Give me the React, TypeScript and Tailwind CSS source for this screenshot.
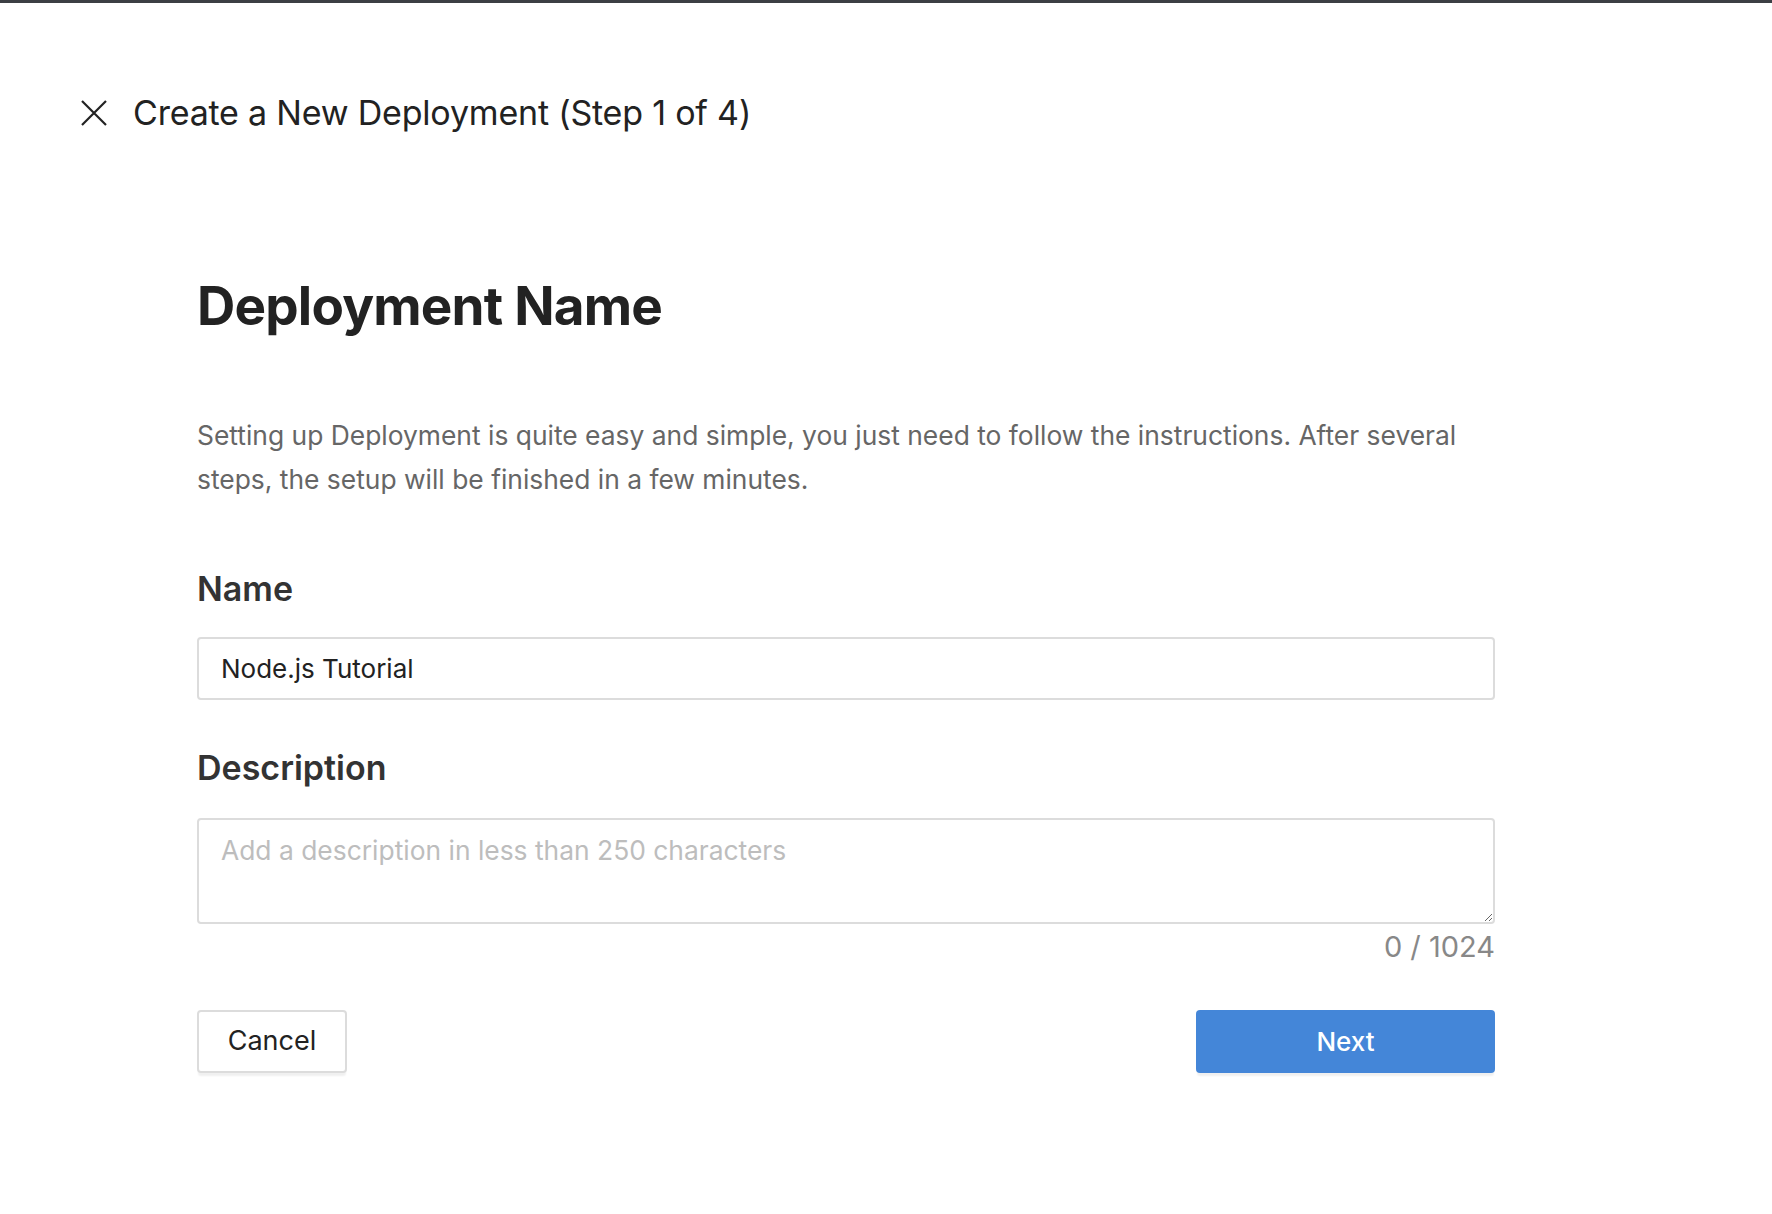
import { useState } from "react";

export default function App() {
  const [name, setName] = useState("Node.js Tutorial");
  const [description, setDescription] = useState("");

  return (
    <div className="min-h-screen bg-white font-['Inter',sans-serif] text-[#222]">
      <div className="h-[3px] bg-[#3c3f44]" />

      <header className="flex items-center gap-[26px] pl-[81px] pt-[90px]">
        <svg width="26" height="26" viewBox="0 0 26 26" className="text-[#222]">
          <path d="M1 1L25 25M25 1L1 25" stroke="currentColor" strokeWidth="2.2" />
        </svg>
        <h1 className="text-[34px] font-normal leading-[40px] tracking-[-0.2px]">
          Create a New Deployment (Step 1 of 4)
        </h1>
      </header>

      <main className="ml-[197px] w-[1298px] pt-[147px]">
        <h2 className="text-[53px] font-bold leading-none tracking-[-0.8px]">
          Deployment Name
        </h2>

        <p className="mt-[80px] text-[26.4px] leading-[44px] text-[#666]">
          Setting up Deployment is quite easy and simple, you just need to follow the instructions. After several
          steps, the setup will be finished in a few minutes.
        </p>

        <label className="mt-[68px] block text-[34px] font-semibold leading-[40px] text-[#333]">
          Name
        </label>
        <input
          value={name}
          onChange={(event) => setName(event.target.value)}
          className="mt-[28px] h-[63px] w-full rounded-[4px] border-2 border-[#dcdcdc] px-[22px] text-[26px] text-[#222] outline-none"
        />

        <label className="mt-[48px] block text-[34px] font-semibold leading-[40px] text-[#333]">
          Description
        </label>
        <textarea
          value={description}
          onChange={(event) => setDescription(event.target.value)}
          placeholder="Add a description in less than 250 characters"
          className="mt-[30px] block h-[106px] w-full rounded-[4px] border-2 border-[#dcdcdc] px-[22px] py-[12px] text-[26.4px] leading-[36px] text-[#222] outline-none placeholder:text-[#bdbdbd]"
        />
        <div className="mt-[6px] text-right text-[29px] leading-[34px] text-[#888]">
          {description.length} / 1024
        </div>

        <div className="mt-[46px] flex items-center justify-between">
          <button className="h-[63px] w-[150px] rounded-[4px] border-2 border-[#dcdcdc] bg-white text-[27px] text-[#222] shadow-[0_4px_2px_-1px_#f0f0f0]">
            Cancel
          </button>
          <button className="h-[63px] w-[299px] rounded-[4px] bg-[#4486d8] text-[26px] font-medium text-white shadow-[0_4px_2px_-1px_#f0f0f0]">
            Next
          </button>
        </div>
      </main>
    </div>
  );
}
